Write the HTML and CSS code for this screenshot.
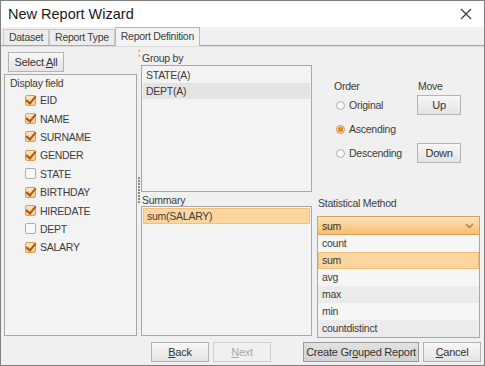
FILE: index.html
```html
<!DOCTYPE html>
<html lang="en">
<head>
    <meta charset="UTF-8">
    <title>New Report Wizard</title>
    <link rel="stylesheet" href="styles.css">
</head>
<body>
    <div class="window">
        <div class="titlebar">
            <span class="title">New Report Wizard</span>
            <svg class="close" width="12" height="12" viewBox="0 0 12 12">
                <path d="M1 1 L11 11 M11 1 L1 11" stroke="#333" stroke-width="1.1" fill="none"/>
            </svg>
        </div>

        <div class="tabs">
            <div class="tab">Dataset</div>
            <div class="tab">Report Type</div>
            <div class="tab active">Report Definition</div>
        </div>

        <div class="content">
            <div class="col-left">
                <button class="btn select-all">Select <u>A</u>ll</button>
                <div class="panel">
                    <div class="panel-label">Display field</div>
                    <div class="field"><span class="cb on"></span>EID</div>
                    <div class="field"><span class="cb on"></span>NAME</div>
                    <div class="field"><span class="cb on"></span>SURNAME</div>
                    <div class="field"><span class="cb on"></span>GENDER</div>
                    <div class="field"><span class="cb"></span>STATE</div>
                    <div class="field"><span class="cb on"></span>BIRTHDAY</div>
                    <div class="field"><span class="cb on"></span>HIREDATE</div>
                    <div class="field"><span class="cb"></span>DEPT</div>
                    <div class="field"><span class="cb on"></span>SALARY</div>
                </div>
            </div>

            <div class="splitter">
                <span class="arrows">‹<br>›</span>
                <span class="grip"></span>
            </div>

            <div class="col-mid">
                <div class="label">Group by</div>
                <div class="list group-list">
                    <div class="item">STATE(A)</div>
                    <div class="item grey">DEPT(A)</div>
                </div>
                <div class="label summary-label">Summary</div>
                <div class="list summary-list">
                    <div class="item picked">sum(SALARY)</div>
                </div>
            </div>

            <div class="col-right">
                <div class="order-grid">
                    <div class="head">Order</div>
                    <div class="head">Move</div>
                    <div class="radio-row"><span class="radio"></span>Original</div>
                    <div class="cell"><button class="btn small">Up</button></div>
                    <div class="radio-row"><span class="radio on"></span>Ascending</div>
                    <div></div>
                    <div class="radio-row"><span class="radio"></span>Descending</div>
                    <div class="cell"><button class="btn small">Down</button></div>
                </div>

                <div class="label stat-label">Statistical Method</div>
                <div class="combo">
                    <span>sum</span>
                    <svg width="9" height="6" viewBox="0 0 9 6">
                        <path d="M1 1 L4.5 4.5 L8 1" stroke="#b57a3c" stroke-width="1.3" fill="none"/>
                    </svg>
                </div>
                <div class="dropdown">
                    <div class="opt">count</div>
                    <div class="opt picked">sum</div>
                    <div class="opt">avg</div>
                    <div class="opt alt">max</div>
                    <div class="opt">min</div>
                    <div class="opt alt">countdistinct</div>
                </div>
            </div>
        </div>

        <div class="footer">
            <button class="btn foot"><u>B</u>ack</button>
            <button class="btn foot disabled"><u>N</u>ext</button>
            <button class="btn foot default">Create Gr<u>o</u>uped Report</button>
            <button class="btn foot"><u>C</u>ancel</button>
        </div>
    </div>
</body>
</html>
```

FILE: styles.css
```css
* {
    margin: 0;
    padding: 0;
    box-sizing: border-box;
}

body {
    background: #ffffff;
    font-family: 'Liberation Sans', Arial, sans-serif;
    font-size: 10.5px;
    letter-spacing: -0.25px;
    color: #3c3c3c;
}

.window {
    width: 485px;
    height: 366px;
    border: 1px solid #808080;
    background: #f0f0f0;
    display: flex;
    flex-direction: column;
}

/* title bar */
.titlebar {
    height: 26px;
    background: #ffffff;
    display: flex;
    align-items: center;
    justify-content: space-between;
    padding: 0 12px 0 7px;
}

.title {
    font-size: 14.5px;
    letter-spacing: 0;
    color: #1a1a1a;
}

/* tabs */
.tabs {
    height: 19px;
    display: flex;
    align-items: flex-end;
    padding-left: 2px;
    border-bottom: 1px solid #a9a9a9;
    box-shadow: 0 1px 0 #dcdcdc;
}

.tab {
    height: 16px;
    padding: 0 5px;
    line-height: 15px;
    font-size: 10.5px;
    letter-spacing: -0.3px;
    border: 1px solid #c8c8c8;
    border-bottom: none;
    background: #ececec;
    color: #404040;
}

.tab.active {
    line-height: 17px;
    background: #f3f3f3;
    border-color: #b8b8b8;
    margin-bottom: -1px;
    height: 19px;
}

/* main area */
.content {
    height: 291px;
    display: flex;
    padding-left: 3px;
}

.col-left {
    width: 133px;
    padding-top: 6px;
}

.btn {
    font-family: inherit;
    font-size: 11px;
    letter-spacing: -0.25px;
    color: #333;
    border: 1px solid #b4b4b4;
    background: linear-gradient(#f7f7f7, #e4e4e4);
    text-align: center;
    white-space: pre;
}

.select-all {
    display: block;
    width: 56px;
    height: 20px;
    margin-left: 4px;
    margin-bottom: 2px;
}

.panel {
    height: 262px;
    border: 1px solid #a8a8a8;
    background: #f3f3f3;
    padding-top: 2px;
}

.panel-label {
    height: 13px;
    line-height: 13px;
    padding-left: 5px;
    margin-bottom: 1px;
}

.field {
    height: 18.4px;
    display: flex;
    align-items: center;
    padding-left: 20px;
}

.cb {
    width: 11px;
    height: 11px;
    border: 1px solid #adadad;
    border-radius: 2px;
    background: #f9f9f9;
    margin-right: 4px;
    position: relative;
}

.cb.on {
    border-color: #dc9c58;
    background: linear-gradient(#fde6c6, #f6c98c);
}

.cb.on::after {
    content: '';
    position: absolute;
    left: 2px;
    top: -2px;
    width: 4px;
    height: 8px;
    border-right: 2px solid #b0560a;
    border-bottom: 2px solid #b0560a;
    transform: rotate(40deg);
}

/* splitter */
.splitter {
    width: 4px;
    display: flex;
    flex-direction: column;
    align-items: center;
    padding-top: 2px;
}

.arrows {
    font-size: 6px;
    line-height: 5px;
    color: #555;
}

.grip {
    margin-top: 119px;
    width: 2px;
    height: 26px;
    background: repeating-linear-gradient(#8a8a8a 0 2px, transparent 2px 3px);
}

/* middle column */
.col-mid {
    width: 171px;
    padding-top: 5px;
}

.label {
    height: 14px;
    line-height: 14px;
    padding-left: 1px;
}

.list {
    border: 1px solid #a8a8a8;
    background: #f3f3f3;
    padding: 1px;
}

.group-list {
    height: 127px;
}

.summary-label {
    margin-top: 1px;
    height: 13px;
}

.summary-list {
    height: 130px;
}

.item {
    height: 16px;
    line-height: 16px;
    padding-left: 3px;
}

.item.grey {
    background: #e4e4e4;
}

.item.picked {
    background: #fdd69f;
    border: 1px solid #f2c07c;
    line-height: 14px;
}

/* right column */
.col-right {
    width: 165px;
    margin-left: 3px;
}

.order-grid {
    margin-top: 34px;
    margin-left: 19px;
    display: grid;
    grid-template-columns: 83px 44px;
    grid-template-rows: 12px 24px 24px 24px;
}

.order-grid .head {
    line-height: 12px;
}

.order-grid .head + .head {
    padding-left: 1px;
}

.radio-row {
    display: flex;
    align-items: center;
    margin-top: 2px;
}

.radio {
    width: 9px;
    height: 9px;
    border-radius: 50%;
    border: 1px solid #ababab;
    background: #f8f8f8;
    margin: 0 4px 0 2px;
}

.radio.on {
    border-color: #d2914c;
    background: radial-gradient(circle, #e48b2c 0 2.5px, #fbe2c2 3px);
}

.cell {
    margin-top: 2px;
    display: flex;
    align-items: center;
}

.btn.small {
    width: 44px;
    height: 20px;
}

.stat-label {
    margin-top: 32px;
    margin-left: 2px;
}

.combo {
    margin: 6px 0 0 2px;
    height: 19px;
    border: 1px solid #d7a063;
    background: linear-gradient(#fde3bc, #f8bd6d);
    display: flex;
    align-items: center;
    justify-content: space-between;
    padding: 0 5px 0 4px;
    color: #3a3020;
}

.dropdown {
    margin-left: 2px;
    border: 1px solid #a8a8a8;
    border-top: none;
    height: 103px;
}

.opt {
    height: 17px;
    line-height: 17px;
    padding-left: 4px;
    background: #f6f6f6;
}

.opt.alt {
    background: #ebebeb;
}

.opt.picked {
    background: #fdd69f;
    border: 1px solid #f0bf7c;
    line-height: 15px;
    padding-left: 3px;
}

/* footer */
.footer {
    flex: 1;
    display: flex;
    align-items: flex-start;
    justify-content: flex-end;
    gap: 4px;
    padding: 5px 3px 0 0;
}

.btn.foot {
    height: 20px;
    width: 58px;
}

.btn.foot.disabled {
    color: #a8a8a8;
    border-color: #cfcfcf;
    background: #f0f0f0;
    margin-right: 28px;
}

.btn.foot.default {
    width: 116px;
    border-color: #9a9a9a;
    background: linear-gradient(#e2e2e2, #d2d2d2);
}
```
